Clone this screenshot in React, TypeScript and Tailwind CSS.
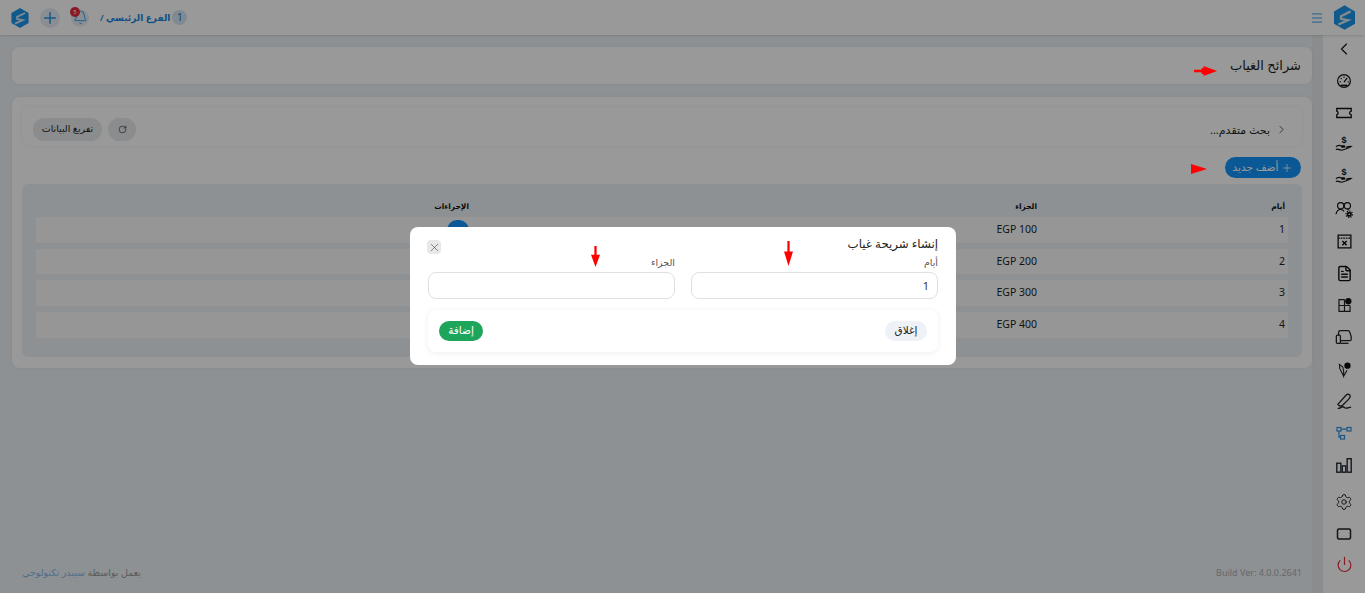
import React from "react";
import { ChevronLeft, ChevronRight, Menu, Plus, Bell, RotateCw, X, Settings, Power, FileText } from "lucide-react";

const font = "font-['Noto_Sans','DejaVu_Sans',sans-serif]";

const Logo = ({ className }: { className: string }) => (
  <svg viewBox="0 0 24 28" className={className}>
    <path d="M12 0 24 7v14l-12 7-12-7V7z" fill="#1b95ea" />
    <path d="M19 7 8 12.500v3l8 1.500-11 5" fill="none" stroke="#d9e6f0" strokeWidth="2.600" />
  </svg>
);

const GaugeIcon = () => (
  <svg viewBox="0 0 20 20" className="w-[16px] h-[16px]" fill="none" stroke="#111" strokeWidth="1.500">
    <circle cx="10" cy="10" r="8" />
    <path d="M10 11.500 14 6M4.500 11h1.500M14.500 11H16M6 6.500l1 1M10 4.500V6" />
    <path d="M6 15.500h8" strokeWidth="2" />
  </svg>
);

const Hand = () => (
  <svg viewBox="0 0 20 20" className="w-[18px] h-[18px]" fill="none" stroke="#111" strokeWidth="1.300">
    <path d="M1 12c2-2 4-2 6-1h3c1 0 1 1 0 1.400H7" />
    <path d="M1 15c2-1 3 0 5 .6 3 .6 8-2 12-4-2-.6-4 .4-6 1" />
    <text x="10" y="8" fontSize="10" fontWeight="700" fill="#111" stroke="none" textAnchor="middle" fontFamily="Liberation Sans">$</text>
  </svg>
);

const Ticket = () => (
  <svg viewBox="0 0 20 20" className="w-[18px] h-[18px]" fill="none" stroke="#111" strokeWidth="1.500">
    <path d="M2 5h16v3c-2.400 .6-2.400 3.400 0 4v3H2v-3c2-.6 2-3.400 0-4z" />
  </svg>
);

const UsersGear = () => (
  <svg viewBox="0 0 20 20" className="w-[19px] h-[19px]" fill="none" stroke="#111" strokeWidth="1.200">
    <circle cx="6" cy="6" r="3.300" />
    <circle cx="13" cy="6" r="3.300" />
    <path d="M1 15c.6-3 2.500-5 5-5 1.600 0 2.800 .7 3.600 2" />
    <path d="M13 10c.7 0 1.400 .2 2 .5" />
    <circle cx="15" cy="15" r="1.800" strokeWidth="1.800" />
    <circle cx="15" cy="15" r="3.400" strokeWidth="1.200" strokeDasharray="1.300 1.300" />
  </svg>
);

const FileClose = () => (
  <svg viewBox="0 0 20 20" className="w-[17px] h-[17px]" fill="none" stroke="#111" strokeWidth="1.500">
    <rect x="2.500" y="2.500" width="15" height="15" />
    <path d="M2.500 6h15" strokeDasharray="2 1" />
    <path d="M7.500 9.500l5 5m0-5-5 5" strokeWidth="1.800" />
  </svg>
);

const GridBadge = () => (
  <svg viewBox="0 0 20 20" className="w-[17px] h-[17px]" fill="none" stroke="#222" strokeWidth="1.400">
    <path d="M10 3H3.500v14h13v-7" />
    <path d="M3.500 10h13M10 3v14" />
    <circle cx="14.500" cy="5" r="3.700" fill="#111" stroke="none" />
  </svg>
);

const Printer = () => (
  <svg viewBox="0 0 20 20" className="w-[18px] h-[18px]" fill="none" stroke="#222" strokeWidth="1.400">
    <rect x="1.500" y="8" width="4.500" height="9" rx="1" />
    <path d="M4 8V5c0-1 .7-2 2-2h8.500c1 0 1.500 .6 1.800 1.500L18 9.500v3c0 .8-.5 1.500-1.500 1.500H6" />
    <path d="M6 17h9" />
  </svg>
);

const PenTool = () => (
  <svg viewBox="0 0 20 20" className="w-[17px] h-[17px]" fill="none" stroke="#222" strokeWidth="1.300">
    <path d="M9 18 4.500 9 4 4l4 3 1 5v6l4-7" />
    <circle cx="13.500" cy="5.500" r="3.700" fill="#111" stroke="none" />
  </svg>
);

const Signature = () => (
  <svg viewBox="0 0 20 20" className="w-[19px] h-[19px]" fill="none" stroke="#222" strokeWidth="1.400">
    <path d="M3 13 12 3c1.500-1.300 4-.4 4 1.500 0 1-1 2.500-2 3.500l-6 6c-1.500 1-3.500 1-5-1z" />
    <path d="M3 17c2 1 3-1.500 5-1.500s2 1.500 4 1.500 3-1 5-1" />
  </svg>
);

const Flow = () => (
  <svg viewBox="0 0 16 16" className="w-[16px] h-[16px]" fill="none" stroke="#2b93e6" strokeWidth="1.200">
    <rect x="1" y="2.500" width="4" height="3.500" />
    <rect x="11" y="2.500" width="4" height="3.500" />
    <rect x="4.500" y="10.500" width="4" height="3.500" />
    <path d="M5 4.200h6M3 6v6.200h1.500" />
  </svg>
);

const Bars = () => (
  <svg viewBox="0 0 20 20" className="w-[18px] h-[18px]" fill="none" stroke="#1d2530" strokeWidth="1.500">
    <rect x="2" y="8" width="4.500" height="10" />
    <rect x="8" y="11" width="4" height="7" />
    <rect x="13.500" y="3" width="4.500" height="15" />
  </svg>
);

const Screen = () => (
  <svg viewBox="0 0 16 16" className="w-[16px] h-[16px]" fill="none" stroke="#222" strokeWidth="1.500">
    <rect x="1.500" y="3" width="13" height="10" rx="1.500" />
  </svg>
);

const sideIcons = [
  <GaugeIcon key="a" />,
  <Ticket key="b" />,
  <Hand key="c" />,
  <Hand key="d" />,
  <UsersGear key="e" />,
  <FileClose key="f" />,
  <FileText key="g" size={17} strokeWidth={2} color="#111" />,
  <GridBadge key="h" />,
  <Printer key="i" />,
  <PenTool key="j" />,
  <Signature key="k" />,
  <Flow key="l" />,
  <Bars key="m" />,
];

const rows = [
  ["1", "EGP 100"],
  ["2", "EGP 200"],
  ["3", "EGP 300"],
  ["4", "EGP 400"],
];

const Arrow = ({ className, path }: { className: string; path: string }) => (
  <svg viewBox="0 0 24 24" preserveAspectRatio="none" className={`absolute ${className}`}>
    <path d={path} fill="#ff0000" />
  </svg>
);

export default function App() {
  return (
    <div dir="rtl" className={`${font} relative h-screen w-full overflow-hidden bg-[#edf2f5] flex flex-col text-[#1b1f24]`}>
      {/* top bar */}
      <header className="h-[35px] shrink-0 bg-white shadow-sm flex items-center z-10">
        <div className="w-[42px] flex justify-center">
          <Logo className="w-[21px] h-[25px]" />
        </div>
        <Menu size={14} strokeWidth={1.5} color="#1b95ea" className="mr-[-1px]" />
        <div className="mr-auto flex items-center pl-[11px]">
          <span className="w-[15px] h-[15px] rounded-full bg-[#d6e6f3] text-[#1b6fb5] text-[10px] flex items-center justify-center">1</span>
          <span className="text-[9px] font-semibold text-[#1b85dc] mr-[2px]">الفرع الرئيسي /</span>
          <div className="relative w-[18px] h-[18px] mr-[11px] rounded-full bg-[#e6edf3] flex items-center justify-center">
            <Bell size={15} strokeWidth={1.4} color="#1b95ea" />
            <span className="absolute -top-[2px] -left-[1px] w-[10px] h-[10px] rounded-full bg-[#e8283f] text-white text-[6px] leading-none flex items-center justify-center">5</span>
          </div>
          <div className="w-[20px] h-[20px] mr-[11px] rounded-full bg-[#e6edf3] flex items-center justify-center">
            <Plus size={18} strokeWidth={1.9} color="#1b95ea" />
          </div>
          <Logo className="w-[18px] h-[20px] mr-[11px]" />
        </div>
      </header>

      <div className="flex-1 flex min-h-0">
        {/* side menu */}
        <aside className="w-[42px] shrink-0 bg-white flex flex-col items-center">
          <div className="h-[30px] pb-[2px] flex items-center justify-center">
            <ChevronLeft size={20} strokeWidth={1.3} color="#111" />
          </div>
          {sideIcons.map((icon, i) => (
            <div key={i} className="h-[32px] w-full flex items-center justify-center">
              {icon}
            </div>
          ))}
          <div className="h-[32px] mt-[5px] flex items-center justify-center">
            <Settings size={18} strokeWidth={1.3} color="#222" />
          </div>
          <div className="h-[32px] flex items-center justify-center">
            <Screen />
          </div>
          <div className="h-[30px] mt-[-1px] flex items-center justify-center">
            <Power size={17} strokeWidth={1.6} color="#e8283f" />
          </div>
        </aside>
        <div className="w-[11px] shrink-0 bg-[#e6eaec]" />

        {/* page */}
        <main className="flex-1 flex flex-col pl-[12px] pt-[12px] min-w-0">
          <section className="h-[37px] bg-white rounded-lg shadow-[0_0_4px_rgba(0,0,0,0.05)] flex items-center pr-[11px]">
            <h1 className="text-[13px] font-medium leading-none mt-[-1px]">شرائح الغياب</h1>
          </section>

          <section className="mt-[13px] h-[271px] bg-white rounded-lg shadow-[0_0_4px_rgba(0,0,0,0.05)] p-[10px]">
            <div className="h-[39px] rounded-lg bg-white shadow-[0_0_4px_rgba(0,0,0,0.05)] flex items-center pr-[14px] pl-[11px]">
              <ChevronRight size={13} strokeWidth={1.3} className="mt-[6px]" />
              <span className="text-[11px] mr-[5px] mt-[8px]">بحث متقدم...</span>
              <div className="mr-auto flex gap-[6px] mt-[5px]">
                <button className="w-[28px] h-[23px] rounded-full bg-[#e6e9eb] flex items-center justify-center">
                  <RotateCw size={9} strokeWidth={1.6} />
                </button>
                <button className="w-[69px] h-[23px] rounded-full bg-[#e6e9eb] text-[9.500px]">تفريغ البيانات</button>
              </div>
            </div>

            <div className="h-[38px] flex items-start pt-[11px]">
              <button className="w-[76px] h-[21px] mr-px rounded-full bg-[#1293fa] text-white text-[10.500px] flex items-center justify-center gap-[3px]">
                <Plus size={12} strokeWidth={1.6} />
                أضف جديد
              </button>
            </div>

            <div className="h-[173px] rounded-md bg-[#edf2f5] px-[14px]">
              <div className="h-[33px] grid grid-cols-[248px_568px_1fr] items-end pb-[5px] pr-[3px] text-[7.500px] font-bold text-[#111]">
                <span>أيام</span>
                <span>الجزاء</span>
                <span>الإجراءات</span>
              </div>
              <div className="flex flex-col gap-[6px]">
                {rows.map(([day, fine]) => (
                  <div key={day} className="h-[25.700px] bg-white/70 grid grid-cols-[248px_568px_1fr] items-center pr-[3px] text-[10.500px]">
                    <span>{day}</span>
                    <span dir="ltr" className="text-right">{fine}</span>
                    <span className="w-[22px] h-[20px] rounded-full bg-[#1293fa]" />
                  </div>
                ))}
              </div>
            </div>
          </section>

          <footer className="mt-auto h-[30px] flex items-start justify-between pl-[10px] pt-[3px] pr-[10px] text-[#a9adb1]">
            <span dir="ltr" className="text-[9px]">Build Ver: 4.0.0.2641</span>
            <span className="text-[9.500px] text-[#969696]">
              يعمل بواسطة <span className="text-[#7db7e9]">سيبدر تكنولوجي</span>
            </span>
          </footer>
        </main>
      </div>

      {/* backdrop and dialog */}
      <div className="absolute inset-0 z-20 bg-black/40" />
      <div className="absolute z-30 left-[410px] top-[227px] w-[546px] h-[138px] bg-white rounded-lg pt-[10px] px-[18px]">
        <div className="flex justify-between items-start h-[14px]">
          <h2 className="text-[11.800px] leading-[12px] font-medium text-[#1b1f24]">إنشاء شريحة غياب</h2>
          <button className="w-[14px] h-[14px] mt-[3px] -ml-px bg-[#e8e8e8] rounded-sm flex items-center justify-center">
            <X size={13} strokeWidth={1} color="#333" />
          </button>
        </div>
        <div className="grid grid-cols-2 gap-x-[16px] mt-[6px]">
          <label className="text-[9.500px] leading-[13px] text-[#555]">
            <span className="block mt-[-1px] mb-[3px]">أيام</span>
            <div className="h-[27px] rounded-lg border border-[#dfe0e6] flex items-center px-[8px] text-[11px] text-[#333]">1</div>
          </label>
          <label className="text-[9.500px] leading-[13px] text-[#555]">
            <span className="block mt-[-1px] mb-[3px]">الجزاء</span>
            <div className="h-[27px] rounded-lg border border-[#dfe0e6]" />
          </label>
        </div>
        <div className="mt-[11px] h-[42px] rounded-lg bg-white shadow-[0_1px_6px_rgba(0,0,0,0.07)] flex items-center justify-between px-[11px]">
          <button className="w-[42px] h-[20px] rounded-full bg-[#eef2f6] text-[10.500px] text-[#222]">إغلاق</button>
          <button className="w-[44px] h-[20px] rounded-full bg-[#1ea55c] text-[10.500px] text-white">إضافة</button>
        </div>
      </div>

      {/* red marks on the screenshot */}
      <Arrow className="z-40 left-[1194px] top-[66px] w-[23px] h-[10px]" path="M0 9h8V5h2V0l14 12-14 12v-5H8v-4H0z" />
      <Arrow className="z-40 left-[1191px] top-[164px] w-[16px] h-[10px]" path="M0 0l24 12L0 24z" />
      <Arrow className="z-40 left-[591px] top-[246px] w-[9px] h-[21px]" path="M9 0h6v10h9L12 24 0 10h9z" />
      <Arrow className="z-40 left-[784px] top-[241px] w-[9px] h-[25px]" path="M9 0h6v10h9L12 24 0 10h9z" />
    </div>
  );
}
